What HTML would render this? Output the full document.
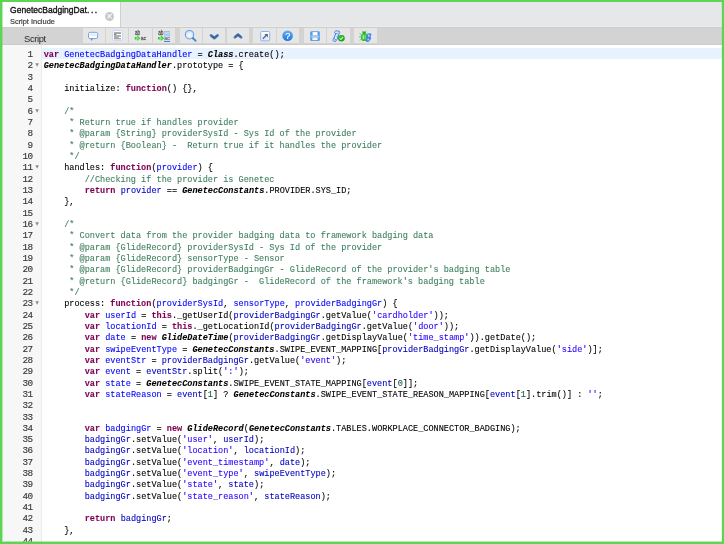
<!DOCTYPE html>
<html><head><meta charset="utf-8">
<style>
*{margin:0;padding:0;box-sizing:border-box}
html,body{width:724px;height:544px;overflow:hidden;background:#5dd552}
#frame,#code,#nums,#tab,#lbl{will-change:transform}
#frame{position:absolute;left:2px;top:2px;width:720px;height:540px;background:#fff;overflow:hidden}
.gx{position:absolute;background:#5dd552}
#tabs{position:absolute;left:0;top:0;width:720px;height:26px;background:#e6e7e9}
#tabs:after{content:"";position:absolute;left:0;top:24px;width:720px;height:1px;background:#ececed}
#tabs:before{content:"";position:absolute;left:0;top:25px;width:720px;height:1px;background:#cdcdcd;z-index:3}
#tab{position:absolute;left:0;top:0;width:119px;height:25px;background:#fff;border-right:1px solid #d0d0d0;z-index:2}
#tt{position:absolute;left:7.8px;top:2.3px;font:9.6px "Liberation Sans",sans-serif;color:#111;white-space:nowrap;-webkit-text-stroke:0.35px #111;transform:scaleX(0.89);transform-origin:0 0}
#ts{position:absolute;left:7.9px;top:14.9px;font:8.1px "Liberation Sans",sans-serif;color:#3a3a3a;white-space:nowrap;-webkit-text-stroke-width:0.2px;transform:scaleX(0.915);transform-origin:0 0}
#tx{position:absolute;left:102.8px;top:9.8px;width:9.2px;height:9.2px;border-radius:50%;background:#c6c8cb}
#tx:before,#tx:after{content:"";position:absolute;left:3.95px;top:1.5px;width:1.3px;height:6.2px;background:#fff;transform:rotate(45deg)}
#tx:after{transform:rotate(-45deg)}
#tb{position:absolute;left:0;top:26px;width:720px;height:17px;background:#d3d3d3;border-bottom:1px solid #cbcbcb}
#lbl{position:absolute;left:21.8px;top:4.6px;font:9.4px "Liberation Sans",sans-serif;letter-spacing:-0.35px;color:#2a2a2a}
.btn{position:absolute;top:0px;width:22.6px;height:15px;background:#e6e6e6}
#ico{position:absolute;left:0;top:0;z-index:5}
#ed{position:absolute;left:0;top:43px;width:720px;height:500px;background:#fff}
#gut{position:absolute;left:0;top:0;width:40px;height:500px;background:#f7f7f7;border-right:1px solid #ececec}
#nums{position:absolute;left:0;top:4.1px;width:30.7px;text-align:right;font:9.3px/11.333px "Liberation Mono",monospace;letter-spacing:-0.5px;color:#383838;-webkit-text-stroke-width:0.15px}
#nums div{position:relative;height:11.333px}
.f{position:absolute;left:33.2px;top:3.1px;width:4px;height:4px}
#code{position:absolute;left:40px;top:3.1px;width:680px;-webkit-text-stroke-width:0.1px;font:8.55px/11.333px "Liberation Mono",monospace;color:#000;white-space:pre}
.l{height:11.333px;padding-left:1.66px;padding-top:2px}
.a{background:#e8f2ff}
i{font-style:normal}
.k{color:#7f0055;font-weight:bold}
.d{color:#0000ff}
.v{color:#0000c0}
.s{color:#2a00ff}
.n{color:#116644}
.c{color:#3f7f5f}
.g{font-weight:bold;font-style:italic}
</style></head><body>
<div id="frame">
 <div id="tabs">
  <div id="tab"><div id="tt">GenetecBadgingDat<span style="letter-spacing:1.8px">...</span></div><div id="ts">Script Include</div><div id="tx"></div></div>
 </div>
 <div id="tb">
  <div id="lbl">Script</div>
  <div class="btn" style="left:81px;width:22px"></div>
  <div class="btn" style="left:104px;width:22px"></div>
  <div class="btn" style="left:127px;width:23px"></div>
  <div class="btn" style="left:151px;width:22px"></div>
  <div class="btn" style="left:178px;width:22px"></div>
  <div class="btn" style="left:201px;width:22px"></div>
  <div class="btn" style="left:225px;width:22px"></div>
  <div class="btn" style="left:251px;width:23px"></div>
  <div class="btn" style="left:275px;width:22px"></div>
  <div class="btn" style="left:302px;width:22px"></div>
  <div class="btn" style="left:325px;width:23px"></div>
  <div class="btn" style="left:352px;width:23px"></div>
 </div>
 <div id="ed">
  <div id="gut"><div id="nums">
<div>1</div>
<div>2<svg class="f" width="4" height="4" viewBox="0 0 4 4"><path d="M0.3 0.3 H3.9 L2.1 3.7 Z" fill="#8c8c8c"/></svg></div>
<div>3</div>
<div>4</div>
<div>5</div>
<div>6<svg class="f" width="4" height="4" viewBox="0 0 4 4"><path d="M0.3 0.3 H3.9 L2.1 3.7 Z" fill="#8c8c8c"/></svg></div>
<div>7</div>
<div>8</div>
<div>9</div>
<div>10</div>
<div>11<svg class="f" width="4" height="4" viewBox="0 0 4 4"><path d="M0.3 0.3 H3.9 L2.1 3.7 Z" fill="#8c8c8c"/></svg></div>
<div>12</div>
<div>13</div>
<div>14</div>
<div>15</div>
<div>16<svg class="f" width="4" height="4" viewBox="0 0 4 4"><path d="M0.3 0.3 H3.9 L2.1 3.7 Z" fill="#8c8c8c"/></svg></div>
<div>17</div>
<div>18</div>
<div>19</div>
<div>20</div>
<div>21</div>
<div>22</div>
<div>23<svg class="f" width="4" height="4" viewBox="0 0 4 4"><path d="M0.3 0.3 H3.9 L2.1 3.7 Z" fill="#8c8c8c"/></svg></div>
<div>24</div>
<div>25</div>
<div>26</div>
<div>27</div>
<div>28</div>
<div>29</div>
<div>30</div>
<div>31</div>
<div>32</div>
<div>33</div>
<div>34</div>
<div>35</div>
<div>36</div>
<div>37</div>
<div>38</div>
<div>39</div>
<div>40</div>
<div>41</div>
<div>42</div>
<div>43</div>
<div>44</div>
  </div></div>
  <div id="code"><div class="l a"><i class="k">var</i> <i class="d">GenetecBadgingDataHandler</i> = <i class="g">Class</i>.create();</div><div class="l"><i class="g">GenetecBadgingDataHandler</i>.prototype = {</div><div class="l"></div><div class="l">    initialize: <i class="k">function</i>() {},</div><div class="l"></div><div class="l">    <i class="c">/*</i></div><div class="l">     <i class="c">* Return true if handles provider</i></div><div class="l">     <i class="c">* @param {String} providerSysId - Sys Id of the provider</i></div><div class="l">     <i class="c">* @return {Boolean} -  Return true if it handles the provider</i></div><div class="l">     <i class="c">*/</i></div><div class="l">    handles: <i class="k">function</i>(<i class="d">provider</i>) {</div><div class="l">        <i class="c">//Checking if the provider is Genetec</i></div><div class="l">        <i class="k">return</i> <i class="v">provider</i> == <i class="g">GenetecConstants</i>.PROVIDER.SYS_ID;</div><div class="l">    },</div><div class="l"></div><div class="l">    <i class="c">/*</i></div><div class="l">     <i class="c">* Convert data from the provider badging data to framework badging data</i></div><div class="l">     <i class="c">* @param {GlideRecord} providerSysId - Sys Id of the provider</i></div><div class="l">     <i class="c">* @param {GlideRecord} sensorType - Sensor</i></div><div class="l">     <i class="c">* @param {GlideRecord} providerBadgingGr - GlideRecord of the provider's badging table</i></div><div class="l">     <i class="c">* @return {GlideRecord} badgingGr -  GlideRecord of the framework's badging table</i></div><div class="l">     <i class="c">*/</i></div><div class="l">    process: <i class="k">function</i>(<i class="d">providerSysId</i>, <i class="d">sensorType</i>, <i class="d">providerBadgingGr</i>) {</div><div class="l">        <i class="k">var</i> <i class="d">userId</i> = <i class="k">this</i>._getUserId(<i class="v">providerBadgingGr</i>.getValue(<i class="s">'cardholder'</i>));</div><div class="l">        <i class="k">var</i> <i class="d">locationId</i> = <i class="k">this</i>._getLocationId(<i class="v">providerBadgingGr</i>.getValue(<i class="s">'door'</i>));</div><div class="l">        <i class="k">var</i> <i class="d">date</i> = <i class="k">new</i> <i class="g">GlideDateTime</i>(<i class="v">providerBadgingGr</i>.getDisplayValue(<i class="s">'time_stamp'</i>)).getDate();</div><div class="l">        <i class="k">var</i> <i class="d">swipeEventType</i> = <i class="g">GenetecConstants</i>.SWIPE_EVENT_MAPPING[<i class="v">providerBadgingGr</i>.getDisplayValue(<i class="s">'side'</i>)];</div><div class="l">        <i class="k">var</i> <i class="d">eventStr</i> = <i class="v">providerBadgingGr</i>.getValue(<i class="s">'event'</i>);</div><div class="l">        <i class="k">var</i> <i class="d">event</i> = <i class="v">eventStr</i>.split(<i class="s">':'</i>);</div><div class="l">        <i class="k">var</i> <i class="d">state</i> = <i class="g">GenetecConstants</i>.SWIPE_EVENT_STATE_MAPPING[<i class="v">event</i>[<i class="n">0</i>]];</div><div class="l">        <i class="k">var</i> <i class="d">stateReason</i> = <i class="v">event</i>[<i class="n">1</i>] ? <i class="g">GenetecConstants</i>.SWIPE_EVENT_STATE_REASON_MAPPING[<i class="v">event</i>[<i class="n">1</i>].trim()] : <i class="s">''</i>;</div><div class="l"></div><div class="l"></div><div class="l">        <i class="k">var</i> <i class="d">badgingGr</i> = <i class="k">new</i> <i class="g">GlideRecord</i>(<i class="g">GenetecConstants</i>.TABLES.WORKPLACE_CONNECTOR_BADGING);</div><div class="l">        <i class="v">badgingGr</i>.setValue(<i class="s">'user'</i>, <i class="v">userId</i>);</div><div class="l">        <i class="v">badgingGr</i>.setValue(<i class="s">'location'</i>, <i class="v">locationId</i>);</div><div class="l">        <i class="v">badgingGr</i>.setValue(<i class="s">'event_timestamp'</i>, <i class="v">date</i>);</div><div class="l">        <i class="v">badgingGr</i>.setValue(<i class="s">'event_type'</i>, <i class="v">swipeEventType</i>);</div><div class="l">        <i class="v">badgingGr</i>.setValue(<i class="s">'state'</i>, <i class="v">state</i>);</div><div class="l">        <i class="v">badgingGr</i>.setValue(<i class="s">'state_reason'</i>, <i class="v">stateReason</i>);</div><div class="l"></div><div class="l">        <i class="k">return</i> <i class="v">badgingGr</i>;</div><div class="l">    },</div><div class="l"></div></div>
 </div>
</div>
<div class="gx" style="left:2px;top:2px;width:1px;height:539px;opacity:.45"></div>
<div class="gx" style="left:721px;top:2px;width:1px;height:540px;opacity:.15"></div>
<div class="gx" style="left:2px;top:541px;width:720px;height:1px;opacity:.45"></div>
<svg id="ico" width="724" height="50" viewBox="0 0 724 50">
<defs>
 <radialGradient id="mg" cx="0.5" cy="0.55" r="0.6"><stop offset="0" stop-color="#ffffff"/><stop offset="1" stop-color="#bcd8f8"/></radialGradient>
 <linearGradient id="hg" x1="0" y1="0" x2="0" y2="1"><stop offset="0" stop-color="#62aef6"/><stop offset="1" stop-color="#2277e0"/></linearGradient>
 <linearGradient id="eg" x1="0" y1="0" x2="0" y2="1"><stop offset="0" stop-color="#ffffff"/><stop offset="1" stop-color="#dce8f8"/></linearGradient>
 <radialGradient id="ag" cx="0.45" cy="0.5" r="0.6"><stop offset="0" stop-color="#8cff7a"/><stop offset="0.5" stop-color="#3cd43c"/><stop offset="1" stop-color="#18a818"/></radialGradient>
</defs>
<!-- 1 comment -->
<rect x="88.5" y="32.3" width="9.2" height="6.3" rx="1.6" fill="#fff" stroke="#77a4e6" stroke-width="1"/>
<rect x="89.6" y="33.3" width="7" height="2.6" fill="#e2edfb"/>
<path d="M90.6 38.5 L91.3 41 L93.2 38.5 Z" fill="#5d8fd8"/>
<!-- 2 format -->
<rect x="112.6" y="30.6" width="9.8" height="9.8" rx="1.2" fill="#fff" stroke="#c3d7f8" stroke-width="1"/>
<rect x="114" y="32.2" width="7" height="1.7" fill="#9a9a9a"/>
<rect x="114" y="33.9" width="2.4" height="1.3" fill="#8a8a8a"/>
<rect x="114" y="35.2" width="7" height="1.6" fill="#a0a0a0"/>
<rect x="114" y="36.8" width="4.6" height="1.3" fill="#a8a8a8"/>
<rect x="114" y="38.1" width="7" height="1.2" fill="#9a9a9a"/>
<!-- 3 replace -->
<text x="135" y="35" font-family="Liberation Sans" font-size="7" textLength="5.2" lengthAdjust="spacingAndGlyphs" fill="#5a5a5a" stroke="#5a5a5a" stroke-width="0.3">ab</text>
<path d="M134.8 37.1 H137.2 V35.5 L140.4 38.25 L137.2 41 V39.4 H134.8 Z" fill="url(#ag)"/>
<text x="141" y="40" font-family="Liberation Sans" font-size="6.2" textLength="5" lengthAdjust="spacingAndGlyphs" fill="#5a5a5a" stroke="#5a5a5a" stroke-width="0.3">ac</text>
<!-- 4 replace all -->
<text x="158.2" y="35" font-family="Liberation Sans" font-size="7" textLength="5.3" lengthAdjust="spacingAndGlyphs" fill="#5a5a5a" stroke="#5a5a5a" stroke-width="0.3">ab</text>
<rect x="164" y="31" width="6" height="10.8" fill="#9cc0ea"/>
<rect x="164.4" y="32.3" width="5.2" height="1.3" fill="#d2e4f7"/>
<rect x="164.4" y="34.5" width="5.2" height="1.1" fill="#c0d8f2"/>
<rect x="164.4" y="36.3" width="5.2" height="4.6" fill="#d6e4f2"/>
<text x="164.5" y="40.2" font-family="Liberation Sans" font-size="5.2" textLength="5" lengthAdjust="spacingAndGlyphs" fill="#707070" stroke="#707070" stroke-width="0.2">ac</text>
<rect x="164" y="41" width="6" height="0.9" fill="#3a7de0"/>
<path d="M158 37 H160.8 V35.3 L164.2 38.2 L160.8 41.1 V39.4 H158 Z" fill="url(#ag)"/>
<!-- 5 search -->
<line x1="192.4" y1="37.6" x2="195.6" y2="40.7" stroke="#4f88d4" stroke-width="2" stroke-linecap="round"/>
<line x1="192.1" y1="37.3" x2="193.4" y2="38.6" stroke="#5a6676" stroke-width="1.6"/>
<circle cx="189.5" cy="34.7" r="4.2" fill="url(#mg)" stroke="#64a0e6" stroke-width="1.05"/>
<!-- 6 down -->
<polyline points="211,35.4 214.3,38.1 217.6,35.4" fill="none" stroke="#4386dc" stroke-width="2.8" stroke-linejoin="round" stroke-linecap="round"/>
<polyline points="211.2,35.5 214.3,38 217.4,35.5" fill="none" stroke="#4e5a6a" stroke-width="1.3"/>
<!-- 7 up -->
<polyline points="234.9,37.3 238,34.6 241.1,37.3" fill="none" stroke="#4386dc" stroke-width="2.8" stroke-linejoin="round" stroke-linecap="round"/>
<polyline points="235.1,37.2 238,34.7 240.9,37.2" fill="none" stroke="#4e5a6a" stroke-width="1.3"/>
<!-- 8 expand -->
<rect x="260.7" y="31.5" width="9" height="9.4" rx="1" fill="url(#eg)" stroke="#8fb3ef" stroke-width="1"/>
<line x1="262.9" y1="38.8" x2="266.3" y2="35.3" stroke="#56667c" stroke-width="1.3"/>
<path d="M264.4 33.9 H267.9 V37.4 Z" fill="#56667c"/>
<!-- 9 help -->
<circle cx="287.6" cy="35.7" r="5.3" fill="url(#hg)"/>
<text x="287.7" y="39" text-anchor="middle" font-family="Liberation Sans" font-size="9" fill="#fff" stroke="#fff" stroke-width="0.2">?</text>
<!-- 10 save -->
<rect x="310.2" y="31.2" width="9.6" height="9.9" rx="1.3" fill="#5b9ae6"/>
<rect x="312.6" y="32.1" width="4.9" height="3.3" fill="#fff"/>
<rect x="311.2" y="35.6" width="7.6" height="1.9" fill="#a6d4f8"/>
<rect x="312.4" y="37.6" width="5.2" height="2.5" fill="#f4f8fc"/>
<!-- 11 script check -->
<path d="M335.6 31 Q337.6 30.6 339.4 31.4 Q340.2 32.4 339.2 33.4 L336.8 39.6 Q336.4 41 335 41.4 Q333.4 41.6 333 40.4 Q332.6 39.2 333.8 38.6 L335.8 33.6 Q334.6 33.4 334.6 32.4 Q334.8 31.4 335.6 31 Z" fill="#e8f0fc" stroke="#3f78dc" stroke-width="1"/>
<path d="M335.8 33.6 Q337.6 33.8 338.4 32.4 M333.8 38.6 Q335.2 38.6 335.8 40" fill="none" stroke="#3f78dc" stroke-width="0.8"/>
<path d="M336.6 35.2 L338.2 35.4 M336.1 36.6 L337.6 36.8" fill="none" stroke="#7aa4e8" stroke-width="0.6"/>
<circle cx="341.4" cy="38.3" r="3.3" fill="#1f9f1f"/>
<circle cx="341.2" cy="37.8" r="2.2" fill="#3cc03c"/>
<path d="M339.7 38.3 L340.9 39.6 L343.1 37.1" fill="none" stroke="#fff" stroke-width="1"/>
<!-- 12 debug -->
<g stroke="#3cbf3c" stroke-width="0.7">
<line x1="359.6" y1="33.4" x2="361.4" y2="34.8"/><line x1="359" y1="36.8" x2="361" y2="36.8"/><line x1="359.6" y1="40.4" x2="361.4" y2="39"/>
<line x1="367.6" y1="33.4" x2="366" y2="34.8"/>
<line x1="362.6" y1="30.8" x2="363.2" y2="32.2"/><line x1="366" y1="30.8" x2="365.4" y2="32.2"/>
</g>
<ellipse cx="364.2" cy="32.9" rx="1.9" ry="1.3" fill="#2ea82e"/>
<ellipse cx="364.2" cy="37.2" rx="3.3" ry="3.9" fill="#34c034"/>
<ellipse cx="363.3" cy="37" rx="0.8" ry="2.6" fill="#a6eea6"/>
<ellipse cx="365.2" cy="37" rx="0.6" ry="2.4" fill="#8ee08e"/>
<path d="M367.6 33.8 Q369.6 32.6 371 33.6 Q371.8 34.6 371 35.8 L370.4 36.6 Q371.6 37.6 370.8 39.2 L369 41.6 Q367.4 42.6 366.2 41.6 Q365.4 40.6 366.2 39.6 L366.8 38.6 Q365.8 37.6 366.4 36.4 Z" fill="#3f7ee6"/>
<path d="M368.2 34.6 Q369.8 34 370.2 35 L369 37.2 Q367.6 37 367.8 36 Z" fill="#a8c8f6"/>
<path d="M367.6 38.6 Q369.2 38.2 369.6 39 L368.6 40.8 Q367.4 40.8 367.2 40 Z" fill="#a8c8f6"/>
</svg>

</body></html>
